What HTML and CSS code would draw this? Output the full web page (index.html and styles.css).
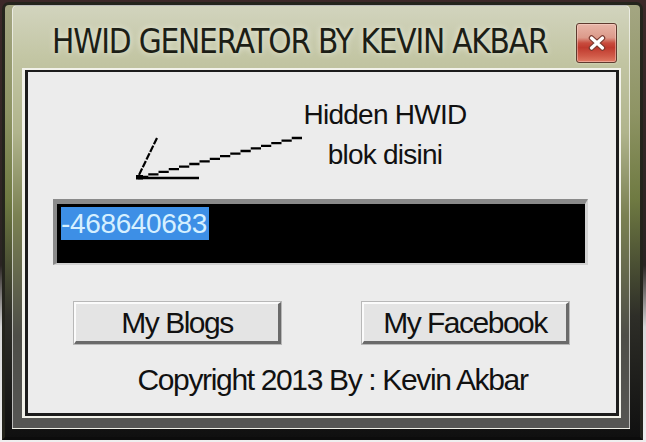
FILE: index.html
```html
<!DOCTYPE html>
<html>
<head>
<meta charset="utf-8">
<link rel="stylesheet" href="styles.css">
</head>
<body>
<div class="window">
  <div class="frame">
    <div class="titlebar">
      <div class="title">HWID GENERATOR BY KEVIN AKBAR</div>
      <div class="close">
        <svg width="18" height="16" viewBox="0 0 18 16">
          <path d="M3.5 3 L14.5 13 M14.5 3 L3.5 13" stroke="#7a3a30" stroke-width="5.5" stroke-linecap="round"/>
          <path d="M3.5 3 L14.5 13 M14.5 3 L3.5 13" stroke="#ffffff" stroke-width="3.2" stroke-linecap="round"/>
        </svg>
      </div>
    </div>
    <div class="client-frame">
      <div class="client">
        <div class="note-row">
          <svg class="arrow" width="166" height="46" viewBox="136 134 166 46">
            <path d="M302 138 h-10.25 m0 2.6 h-10.25 m0 2.6 h-10.25 m0 2.6 h-10.25 m0 2.6 h-10.25 m0 2.6 h-10.25 m0 2.6 h-10.25 m0 2.6 h-10.25 m0 2.6 h-10.25 m0 2.6 h-10.25 m0 2.6 h-10.25 m0 2.6 h-10.25 m0 2.6 h-10.25 m0 2.6 h-10.25 m0 2.6 h-10.25 m0 2.6 h-10.25" stroke="#000" stroke-width="2.3" fill="none"/>
            <path d="M157 138 L138 177" stroke="#000" stroke-width="2.2" stroke-dasharray="7 1.5" fill="none"/>
            <path d="M138 178 H199" stroke="#000" stroke-width="2.6" fill="none"/>
            <rect x="136" y="175" width="7" height="4.5" fill="#000"/>
          </svg>
          <div class="note">Hidden HWID<br>blok disini</div>
        </div>
        <div class="hwid-box"><span class="sel">-468640683</span></div>
        <div class="buttons">
          <button class="btn">My Blogs</button>
          <button class="btn">My Facebook</button>
        </div>
        <div class="copyright">Copyright 2013 By : Kevin Akbar</div>
      </div>
    </div>
  </div>
</div>
</body>
</html>
```

FILE: styles.css
```css
html, body {
  margin: 0;
  padding: 0;
}
body {
  width: 646px;
  height: 442px;
  overflow: hidden;
  background: linear-gradient(180deg, #3c2828 0%, #2a2422 60%, #d8d8d8 74%, #efefef 100%);
}
.window {
  box-sizing: border-box;
  margin: 2px 3px 2px 2px;
  height: 438px;
  border: 3px solid #24241c;
  border-bottom-color: #0c0c0c;
  border-radius: 7px 7px 0 0;
  padding: 0 10px 8px 7px;
  display: flex;
  flex-direction: column;
  background: linear-gradient(180deg, #a4a682 0%, #8e9464 25%, #6f7a42 45%, #2e2e28 72%, #101010 100%);
}
.frame {
  flex: 1;
  display: flex;
  flex-direction: column;
  border: 1px solid rgba(255, 255, 255, 0.6);
  border-radius: 5px 5px 0 0;
  padding: 0 8px 10px 9px;
  background: linear-gradient(180deg, #d2d4be 0%, #c3c6a4 12%, #b0b48c 30%, #7a8052 50%, #4e4e48 78%, #565654 100%);
}
.titlebar {
  height: 62px;
  box-sizing: border-box;
  padding: 17px 4px 0 30px;
  display: flex;
  align-items: flex-start;
}
.title {
  font-family: "DejaVu Sans Condensed", "DejaVu Sans", sans-serif;
  font-stretch: condensed;
  font-size: 33px;
  line-height: 37px;
  letter-spacing: -1.2px;
  color: #1c1e16;
  white-space: nowrap;
  text-shadow: 0 0 6px rgba(255, 255, 250, 0.7);
}
.close {
  margin-left: auto;
  width: 41px;
  height: 40px;
  box-sizing: border-box;
  border: 1px solid #5e3a2e;
  border-radius: 3px;
  box-shadow: inset 0 0 0 1px rgba(255, 220, 210, 0.45), 0 0 3px rgba(255, 255, 240, 0.5);
  background: linear-gradient(180deg, #e8b6a8 0%, #dc9a8a 36%, #c84c3e 50%, #bf3a2e 62%, #d05a48 84%, #e07a64 100%);
  display: flex;
  align-items: center;
  justify-content: center;
}
.client-frame {
  flex: 1;
  display: flex;
  border-style: solid;
  border-width: 2px 2px 2px 3px;
  border-color: #f2f2ea;
}
.client {
  flex: 1;
  border-style: solid;
  border-width: 2px 3px 3px 3px;
  border-color: #1c1c1c;
  background: #ececec;
  font-family: "Liberation Sans", Arial, sans-serif;
  color: #111;
}
.note-row {
  height: 127px;
  box-sizing: border-box;
  padding: 23px 0 0 108px;
  display: flex;
  align-items: flex-start;
}
.arrow {
  display: block;
  margin-top: 39px;
  flex: none;
}
.note {
  width: 166px;
  text-align: center;
  font-size: 28px;
  line-height: 40px;
  letter-spacing: -0.75px;
  white-space: nowrap;
}
.hwid-box {
  box-sizing: border-box;
  margin-left: 25px;
  width: 535px;
  height: 66px;
  border-style: solid;
  border-width: 5px 3px 2px 4px;
  border-color: #8a8a8a #d2d2d2 #d2d2d2 #8a8a8a;
  background: #000;
  padding: 3px 0 0 4px;
}
.sel {
  display: inline-block;
  background: #3d8fe6;
  color: #d6f0ff;
  font-size: 28px;
  line-height: 33px;
  letter-spacing: -0.35px;
  padding-right: 2px;
}
.buttons {
  margin-top: 37px;
  padding-left: 46px;
  display: flex;
  gap: 81px;
}
.btn {
  box-sizing: border-box;
  width: 207px;
  height: 42px;
  padding: 0;
  margin: 0;
  border-style: solid;
  border-width: 2px 3px 3px 2px;
  border-color: #fbfbfb #6a6a6a #6a6a6a #fbfbfb;
  box-shadow: 0 0 0 1px #b8b8b8;
  background: #e4e4e4;
  font-family: "Liberation Sans", Arial, sans-serif;
  font-size: 30px;
  line-height: 37px;
  letter-spacing: -1.5px;
  color: #111;
  text-align: center;
}
.copyright {
  margin-top: 17px;
  padding-left: 21px;
  text-align: center;
  font-size: 30px;
  line-height: 37px;
  letter-spacing: -1.35px;
  white-space: nowrap;
}
```
